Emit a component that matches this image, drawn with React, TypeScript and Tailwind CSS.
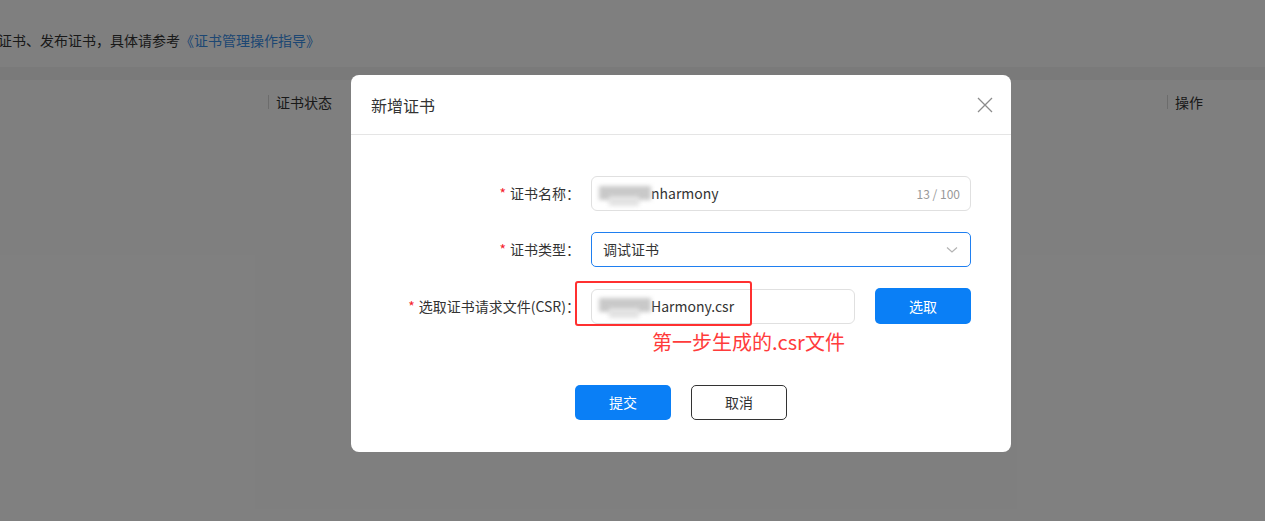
import React from 'react';

const font = { fontFamily: '"Noto Sans CJK SC", "Noto Sans", sans-serif' };

function Blurred({ w = 52 }: { w?: number }) {
  return <span className="relative inline-block h-[20px] align-middle" style={{ width: w }}>
      <span className="absolute left-0 top-[2px] w-full h-[14px] bg-[#c9c9c9] blur-[2px]" />
      <span className="absolute left-[10px] top-[12px] w-[30px] h-[10px] bg-[#e2e2e2] blur-[2px]" />
    </span>;
}

function Label({ text }: { text: string }) {
  return <div className="w-[229px] shrink-0 text-right text-[14px] text-[#333]">
      <span className="text-[#f5222d] mr-1">*</span>
      {text}：
    </div>;
}

export default function App() {
  return <div className="relative w-[1265px] h-[521px] overflow-hidden bg-white" style={font}>
      {/* page behind the dialog */}
      <div className="pt-[30px] h-[67px] text-[14px] text-[#333] ml-[-2px]">
        证书、发布证书，具体请参考
        <span className="text-[#3a8ee6]">《证书管理操作指导》</span>
      </div>
      <div className="h-[13px] bg-[#f5f5f5]" />
      <div className="flex items-center h-[44px] text-[14px] text-[#333]">
        <div className="w-[268px] shrink-0" />
        <div className="w-px h-[14px] bg-[#d9d9d9]" />
        <div className="pl-[7px] w-[898px]">证书状态</div>
        <div className="w-px h-[14px] bg-[#d9d9d9]" />
        <div className="pl-[7px]">操作</div>
      </div>

      {/* mask */}
      <div className="absolute inset-0 bg-black/50" />

      {/* dialog */}
      <div className="absolute left-[351px] top-[75px] w-[660px] h-[377px] bg-white rounded-lg">
        <div className="flex items-center justify-between h-[60px] pl-[20px] pr-[18px] border-b border-[#e5e5e5]">
          <span className="text-[16px] text-[#333]">新增证书</span>
          <svg width="16" height="16" viewBox="0 0 16 16">
            <path d="M1 1L15 15M15 1L1 15" stroke="#8c8c8c" strokeWidth="1.3" />
          </svg>
        </div>

        <div className="pt-[41px] flex flex-col gap-[21px]">
          <div className="flex items-center gap-[11px]">
            <Label text="证书名称" />
            <div className="w-[380px] h-[35px] border border-[#e0e0e0] rounded-[6px] flex items-center pl-[7px] pr-[10px]">
              <Blurred />
              <span className="text-[14px] text-[#333]">nharmony</span>
              <span className="ml-auto text-[12px] text-[#999]">13 / 100</span>
            </div>
          </div>

          <div className="flex items-center gap-[11px]">
            <Label text="证书类型" />
            <div className="w-[380px] h-[35px] border border-[#1f7ff0] rounded-[5px] flex items-center pl-[11px] pr-[12px]">
              <span className="text-[14px] text-[#333]">调试证书</span>
              <svg width="12" height="8" viewBox="0 0 12 8" className="ml-auto">
                <path d="M1 1.5L6 6L11 1.5" stroke="#b3b3b3" strokeWidth="1.2" fill="none" />
              </svg>
            </div>
          </div>

          <div className="flex items-center gap-[11px] relative">
            <Label text="选取证书请求文件(CSR)" />
            <div className="w-[264px] h-[35px] border border-[#e0e0e0] rounded-[6px] flex items-center pl-[7px]">
              <Blurred />
              <span className="text-[14px] text-[#333]">Harmony.csr</span>
            </div>
            <button className="ml-[9px] w-[96px] h-[36px] rounded-[5px] bg-[#0a7ff6] text-white text-[14px]">选取</button>
            {/* annotation */}
            <div className="absolute left-[224px] top-[-7px] w-[177px] h-[45px] border-2 border-[#ff3030] rounded-[3px]" />
            <div className="absolute left-[301px] top-[41px] text-[20px] leading-[25px] text-[#ff3b3b] whitespace-nowrap">
              第一步生成的.csr文件
            </div>
          </div>
        </div>

        <div className="flex justify-center gap-[20px] mt-[61px]">
          <button className="w-[96px] h-[35px] rounded-[5px] bg-[#0a7ff6] text-white text-[14px]">提交</button>
          <button className="w-[96px] h-[35px] rounded-[5px] border border-[#333] text-[#333] text-[14px]">取消</button>
        </div>
      </div>
    </div>;
}
